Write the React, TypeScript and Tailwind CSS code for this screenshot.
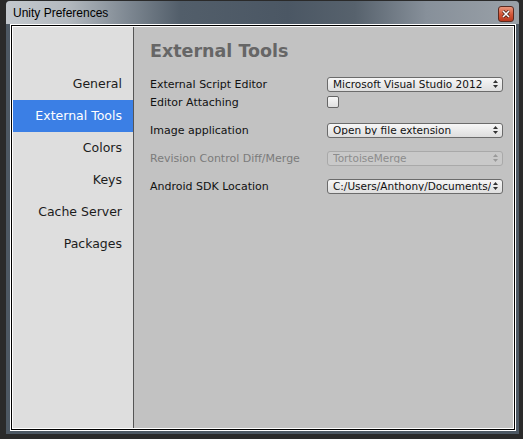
import React from "react";

const navItems = ["General", "External Tools", "Colors", "Keys", "Cache Server", "Packages"];

const Arrows = ({ color }: { color: string }) => (
  <svg width="5" height="8" viewBox="0 0 5 8" aria-hidden="true">
    <path d="M2.5 0 L5 3 H0 Z" fill={color} />
    <path d="M0 5 H5 L2.5 8 Z" fill={color} />
  </svg>
);

const Dropdown = ({ value, disabled = false }: { value: string; disabled?: boolean }) => (
  <div
    className={`flex h-[15px] w-[176px] items-center justify-between rounded-[3px] border pl-[5px] pr-[4px] ${
      disabled
        ? "border-[#a9a9a9] bg-[#c9c9c9] text-[#8c8c8c]"
        : "border-[#6b6b6b] bg-gradient-to-b from-[#f7f7f7] to-[#dedede] text-[#111]"
    }`}
  >
    <span className="truncate text-[10.5px] leading-none">{value}</span>
    <Arrows color={disabled ? "#9a9a9a" : "#333"} />
  </div>
);

const Row = ({ label, disabled = false, children }: { label: string; disabled?: boolean; children: React.ReactNode }) => (
  <div className="flex h-[16px] items-center">
    <span className={`w-[177px] text-[11px] leading-none ${disabled ? "text-[#7b7b7b]" : "text-[#111]"}`}>{label}</span>
    {children}
  </div>
);

export default function App() {
  return (
    <div className="h-[439px] w-[523px] overflow-hidden bg-[#2a2a2a] pl-[6px] pt-[1px]" style={{ fontFamily: '"DejaVu Sans", sans-serif' }}>
      <div className="flex h-[433px] w-[513px] flex-col rounded-t-[4px] bg-[#4d5863]">
        {/* Title bar */}
        <div className="relative flex h-[23px] items-center rounded-t-[4px] bg-[linear-gradient(to_right,#c3c8cd_0%,#b3b9bf_12%,#7d8791_24%,#525e6a_34%,#4b5764_55%,#57626d_68%,#87909a_82%,#9aa1a8_100%)] pl-[7px]">
          <span className="text-[12px] text-black" style={{ fontFamily: '"Liberation Sans", Arial, sans-serif' }}>
            Unity Preferences
          </span>
          <div className="absolute right-[5px] top-[5px] flex h-[16px] w-[16px] items-center justify-center rounded-[3px] border border-[#5a2a20] bg-gradient-to-b from-[#e9967c] via-[#d45a3c] to-[#b8371c]">
            <svg width="8" height="8" viewBox="0 0 8 8" aria-hidden="true">
              <path d="M1 1 L7 7 M7 1 L1 7" stroke="#3a1a12" strokeWidth="3" />
              <path d="M1 1 L7 7 M7 1 L1 7" stroke="#fff" strokeWidth="1.6" />
            </svg>
          </div>
        </div>

        {/* Client area with inner edges */}
        <div className="pb-[3px] pl-[4px] pr-[3px]">
          <div className="border border-white">
            <div className="border border-black">
              <div className="flex h-[403px] border border-white">
                {/* Sidebar */}
                <div className="flex w-[120px] flex-col bg-[#dedede] pt-[41px]">
                  {navItems.map((item) => (
                    <div
                      key={item}
                      className={`flex h-[32px] items-center justify-end pr-[11px] text-[12.5px] ${
                        item === "External Tools" ? "bg-[#3b7fe5] text-white" : "text-[#1c1c1c]"
                      }`}
                    >
                      {item}
                    </div>
                  ))}
                </div>
                <div className="w-px bg-[#555]" />

                {/* Panel */}
                <div className="flex-1 bg-[#c2c2c2] pl-[16px] pt-[14px]">
                  <h1 className="text-[17.5px] font-bold leading-[20px] text-[#666]">External Tools</h1>
                  <div className="mt-[15px] flex flex-col gap-[12px]">
                    <div className="flex flex-col gap-[2px]">
                      <Row label="External Script Editor">
                        <Dropdown value="Microsoft Visual Studio 2012" />
                      </Row>
                      <Row label="Editor Attaching">
                        <div className="h-[12px] w-[12px] rounded-[2px] border border-[#666] bg-gradient-to-b from-[#f8f8f8] to-[#e0e0e0]" />
                      </Row>
                    </div>
                    <Row label="Image application">
                      <Dropdown value="Open by file extension" />
                    </Row>
                    <Row label="Revision Control Diff/Merge" disabled>
                      <Dropdown value="TortoiseMerge" disabled />
                    </Row>
                    <Row label="Android SDK Location">
                      <Dropdown value="C:/Users/Anthony/Documents/" />
                    </Row>
                  </div>
                </div>
              </div>
            </div>
          </div>
        </div>
      </div>
    </div>
  );
}
